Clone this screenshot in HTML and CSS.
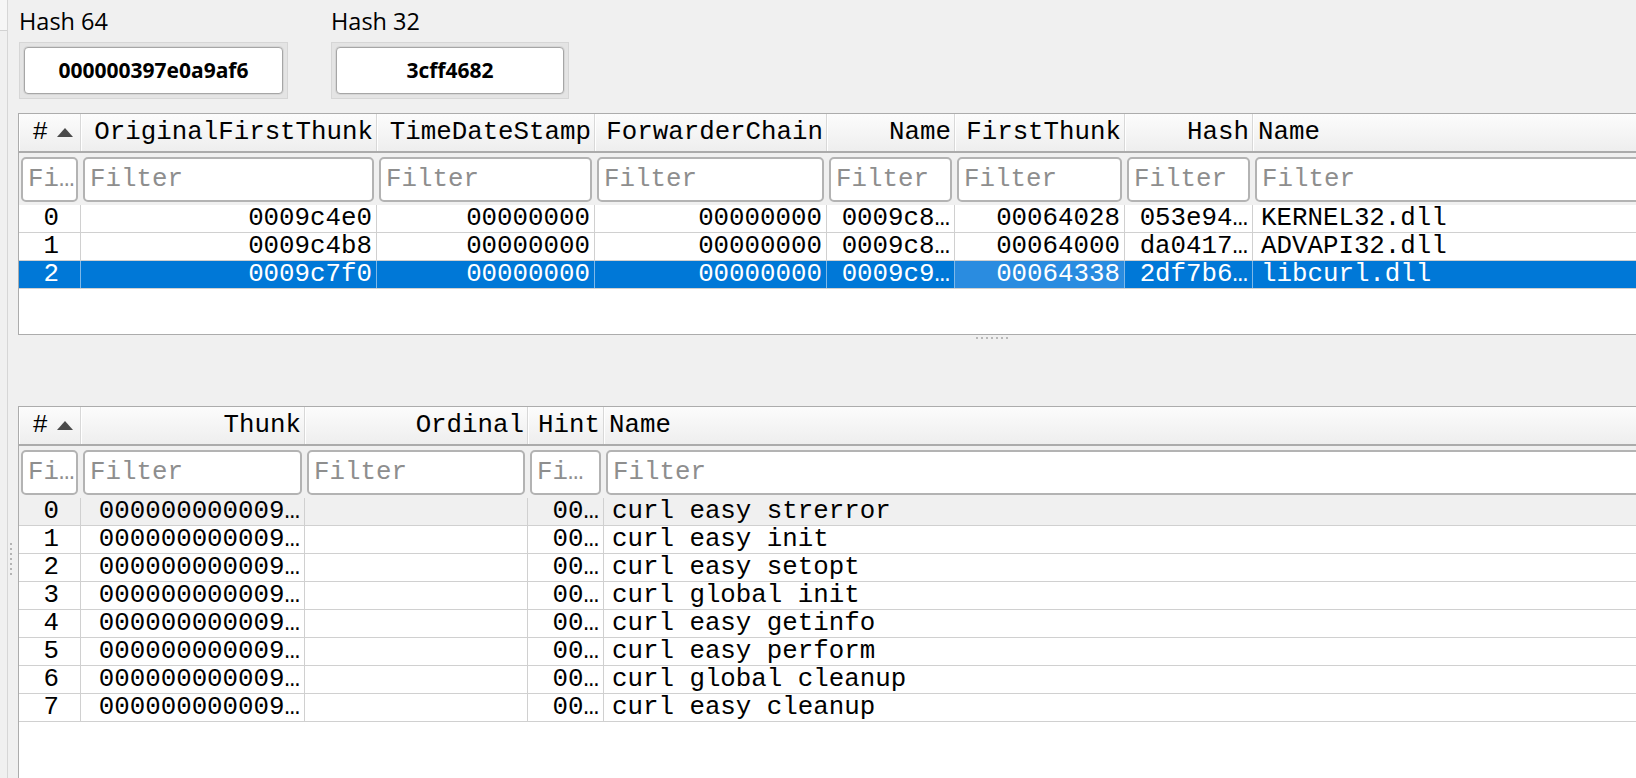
FILE: index.html
```html
<!DOCTYPE html>
<html lang="en">
<head>
  <meta charset="UTF-8" />
  <title>Imports</title>
  <link rel="stylesheet" href="styles.css">
</head>
<body>
  <div class="window">

    <!-- left edge of the neighbour panel -->
    <div class="edge"><div class="edge-top"></div></div>
    <div class="vsplit"><div class="grip-v"></div></div>

    <div class="main">

      <!-- Hashes -->
      <div class="hashes">
        <div class="hash-field">
          <div class="hash-label">Hash 64</div>
          <div class="hash-frame wide"><div class="hash-value">000000397e0a9af6</div></div>
        </div>
        <div class="hash-field">
          <div class="hash-label">Hash 32</div>
          <div class="hash-frame narrow"><div class="hash-value">3cff4682</div></div>
        </div>
      </div>

      <!-- Import descriptors -->
      <div class="grid imports">
        <div class="row head">
          <div class="cell idx"><span>#</span><svg width="16" height="9" viewBox="0 0 16 9"><polygon points="0,9 8,0 16,9" fill="#4a4a4a"/></svg></div>
          <div class="cell">OriginalFirstThunk</div>
          <div class="cell">TimeDateStamp</div>
          <div class="cell">ForwarderChain</div>
          <div class="cell">Name</div>
          <div class="cell">FirstThunk</div>
          <div class="cell">Hash</div>
          <div class="cell l last">Name</div>
        </div>
        <div class="row filters">
          <div class="filter">Fi…</div>
          <div class="filter">Filter</div>
          <div class="filter">Filter</div>
          <div class="filter">Filter</div>
          <div class="filter">Filter</div>
          <div class="filter">Filter</div>
          <div class="filter">Filter</div>
          <div class="filter">Filter</div>
        </div>
        <div class="row">
          <div class="cell num">0</div>
          <div class="cell">0009c4e0</div>
          <div class="cell">00000000</div>
          <div class="cell">00000000</div>
          <div class="cell">0009c8…</div>
          <div class="cell">00064028</div>
          <div class="cell">053e94…</div>
          <div class="cell l last">KERNEL32.dll</div>
        </div>
        <div class="row">
          <div class="cell num">1</div>
          <div class="cell">0009c4b8</div>
          <div class="cell">00000000</div>
          <div class="cell">00000000</div>
          <div class="cell">0009c8…</div>
          <div class="cell">00064000</div>
          <div class="cell">da0417…</div>
          <div class="cell l last">ADVAPI32.dll</div>
        </div>
        <div class="row sel">
          <div class="cell num">2</div>
          <div class="cell">0009c7f0</div>
          <div class="cell">00000000</div>
          <div class="cell">00000000</div>
          <div class="cell">0009c9…</div>
          <div class="cell cur">00064338</div>
          <div class="cell">2df7b6…</div>
          <div class="cell l last">libcurl.dll</div>
        </div>
      </div>

      <div class="hsplit"><div class="grip-h"></div></div>

      <!-- Thunks of the selected dll -->
      <div class="grid thunks">
        <div class="row head">
          <div class="cell idx"><span>#</span><svg width="16" height="9" viewBox="0 0 16 9"><polygon points="0,9 8,0 16,9" fill="#4a4a4a"/></svg></div>
          <div class="cell">Thunk</div>
          <div class="cell">Ordinal</div>
          <div class="cell">Hint</div>
          <div class="cell l last">Name</div>
        </div>
        <div class="row filters">
          <div class="filter">Fi…</div>
          <div class="filter">Filter</div>
          <div class="filter">Filter</div>
          <div class="filter">Fi…</div>
          <div class="filter">Filter</div>
        </div>
        <div class="row hover">
          <div class="cell num">0</div><div class="cell">000000000009…</div><div class="cell"></div><div class="cell">00…</div><div class="cell l last">curl easy strerror</div>
        </div>
        <div class="row">
          <div class="cell num">1</div><div class="cell">000000000009…</div><div class="cell"></div><div class="cell">00…</div><div class="cell l last">curl easy init</div>
        </div>
        <div class="row">
          <div class="cell num">2</div><div class="cell">000000000009…</div><div class="cell"></div><div class="cell">00…</div><div class="cell l last">curl easy setopt</div>
        </div>
        <div class="row">
          <div class="cell num">3</div><div class="cell">000000000009…</div><div class="cell"></div><div class="cell">00…</div><div class="cell l last">curl global init</div>
        </div>
        <div class="row">
          <div class="cell num">4</div><div class="cell">000000000009…</div><div class="cell"></div><div class="cell">00…</div><div class="cell l last">curl easy getinfo</div>
        </div>
        <div class="row">
          <div class="cell num">5</div><div class="cell">000000000009…</div><div class="cell"></div><div class="cell">00…</div><div class="cell l last">curl easy perform</div>
        </div>
        <div class="row">
          <div class="cell num">6</div><div class="cell">000000000009…</div><div class="cell"></div><div class="cell">00…</div><div class="cell l last">curl global cleanup</div>
        </div>
        <div class="row">
          <div class="cell num">7</div><div class="cell">000000000009…</div><div class="cell"></div><div class="cell">00…</div><div class="cell l last">curl easy cleanup</div>
        </div>
      </div>

    </div>
  </div>
</body>
</html>
```

FILE: styles.css
```css
body {
  margin: 0;
  background: #f0f0f0;
  color: #000;
  font-family: 'Liberation Mono', monospace;
  overflow: hidden;
  height: 778px;
}

.window {
  display: flex;
  height: 778px;
}

/* Left edge */
.edge {
  width: 7px;
  border-right: 1px solid #d6d6d6;
  flex: none;
}

.edge-top {
  height: 30px;
  border-bottom: 1px solid #d2d2d2;
  background: #f6f6f6;
}

.vsplit {
  width: 10px;
  flex: none;
}

.grip-v {
  margin: 543px 0 0 2px;
  width: 2px;
  height: 35px;
  background: repeating-linear-gradient(to bottom, #b4b4b4 0 2px, transparent 2px 5px);
}

.main {
  width: 1948px;
  flex: none;
}

/* Hashes */
.hashes {
  display: flex;
  gap: 43px;
  padding: 7px 0 0 1px;
}

.hash-label {
  font-family: 'Open Sans', sans-serif;
  font-size: 23.5px;
  line-height: 28px;
}

.hash-frame {
  margin-top: 7px;
  height: 57px;
  box-sizing: border-box;
  padding: 4px;
  border: 1px solid #d6d6d6;
  background: #e4e4e4;
}

.hash-frame.wide { width: 269px; }
.hash-frame.narrow { width: 238px; }

.hash-value {
  height: 47px;
  box-sizing: border-box;
  border: 1px solid #a6a6a6;
  box-shadow: 0 0 0 1px #d6d6d6;
  border-radius: 4px;
  background: #fff;
  font-family: 'Open Sans', sans-serif;
  font-weight: bold;
  font-size: 21px;
  line-height: 45px;
  text-align: center;
}

/* Tables */
.grid {
  background: #fff;
  border: 1px solid #acacac;
  box-sizing: border-box;
  font-size: 25.8px;
}

.imports {
  margin-top: 14px;
  height: 222px;
}

.thunks {
  height: 420px;
}

.row {
  display: grid;
  height: 28px;
  line-height: 27px;
  border-bottom: 1px solid #d0d0d0;
  box-sizing: border-box;
}

.imports .row { grid-template-columns: 62px 296px 218px 232px 128px 170px 128px 1fr; }
.thunks .row { grid-template-columns: 62px 224px 223px 76px 1fr; }

.cell {
  border-right: 1px solid #d0d0d0;
  padding: 0 4px;
  text-align: right;
  white-space: nowrap;
  overflow: hidden;
}

.cell.l {
  text-align: left;
  padding-left: 8px;
}

.cell.last { border-right: none; }

.cell.num { padding-right: 21px; }

.row.head {
  height: 39px;
  line-height: 37px;
  background: linear-gradient(#fcfcfc, #eeeeee);
  border-bottom: 2px solid #ababab;
}

.row.head .cell {
  padding: 0 3px;
  border-right: 1px solid #d8d8d8;
  box-shadow: inset 1px 0 #fff;
}

.row.head .cell.l { padding-left: 5px; }
.row.head .cell.last { border-right: none; }

.row.head .idx {
  display: flex;
  align-items: center;
  justify-content: flex-end;
  gap: 9px;
  padding-right: 7px;
}

.row.filters {
  height: 52px;
  padding-top: 4px;
  background: #f0f0f0;
  border-bottom: none;
}

.filter {
  margin: 0 3px 0 2px;
  height: 45px;
  box-sizing: border-box;
  border: 2px solid #b3b3b3;
  border-radius: 5px;
  background: #fff;
  color: #8e8e8e;
  line-height: 41px;
  padding: 0 5px;
  white-space: nowrap;
  overflow: hidden;
}

.row.sel {
  background: #0078d7;
  color: #fff;
}

.row.sel .cell { border-right-color: #7fb8e8; }
.row.sel .cell.last { border-right: none; }
.row.sel .cur { background: #2a8ce0; }

.row.hover { background: #f0f0f0; }

.hsplit {
  height: 71px;
  display: flex;
  justify-content: center;
}

.grip-h {
  margin-top: 2px;
  width: 32px;
  height: 2px;
  background: repeating-linear-gradient(to right, #b8b8b8 0 2px, transparent 2px 5px);
}
```
